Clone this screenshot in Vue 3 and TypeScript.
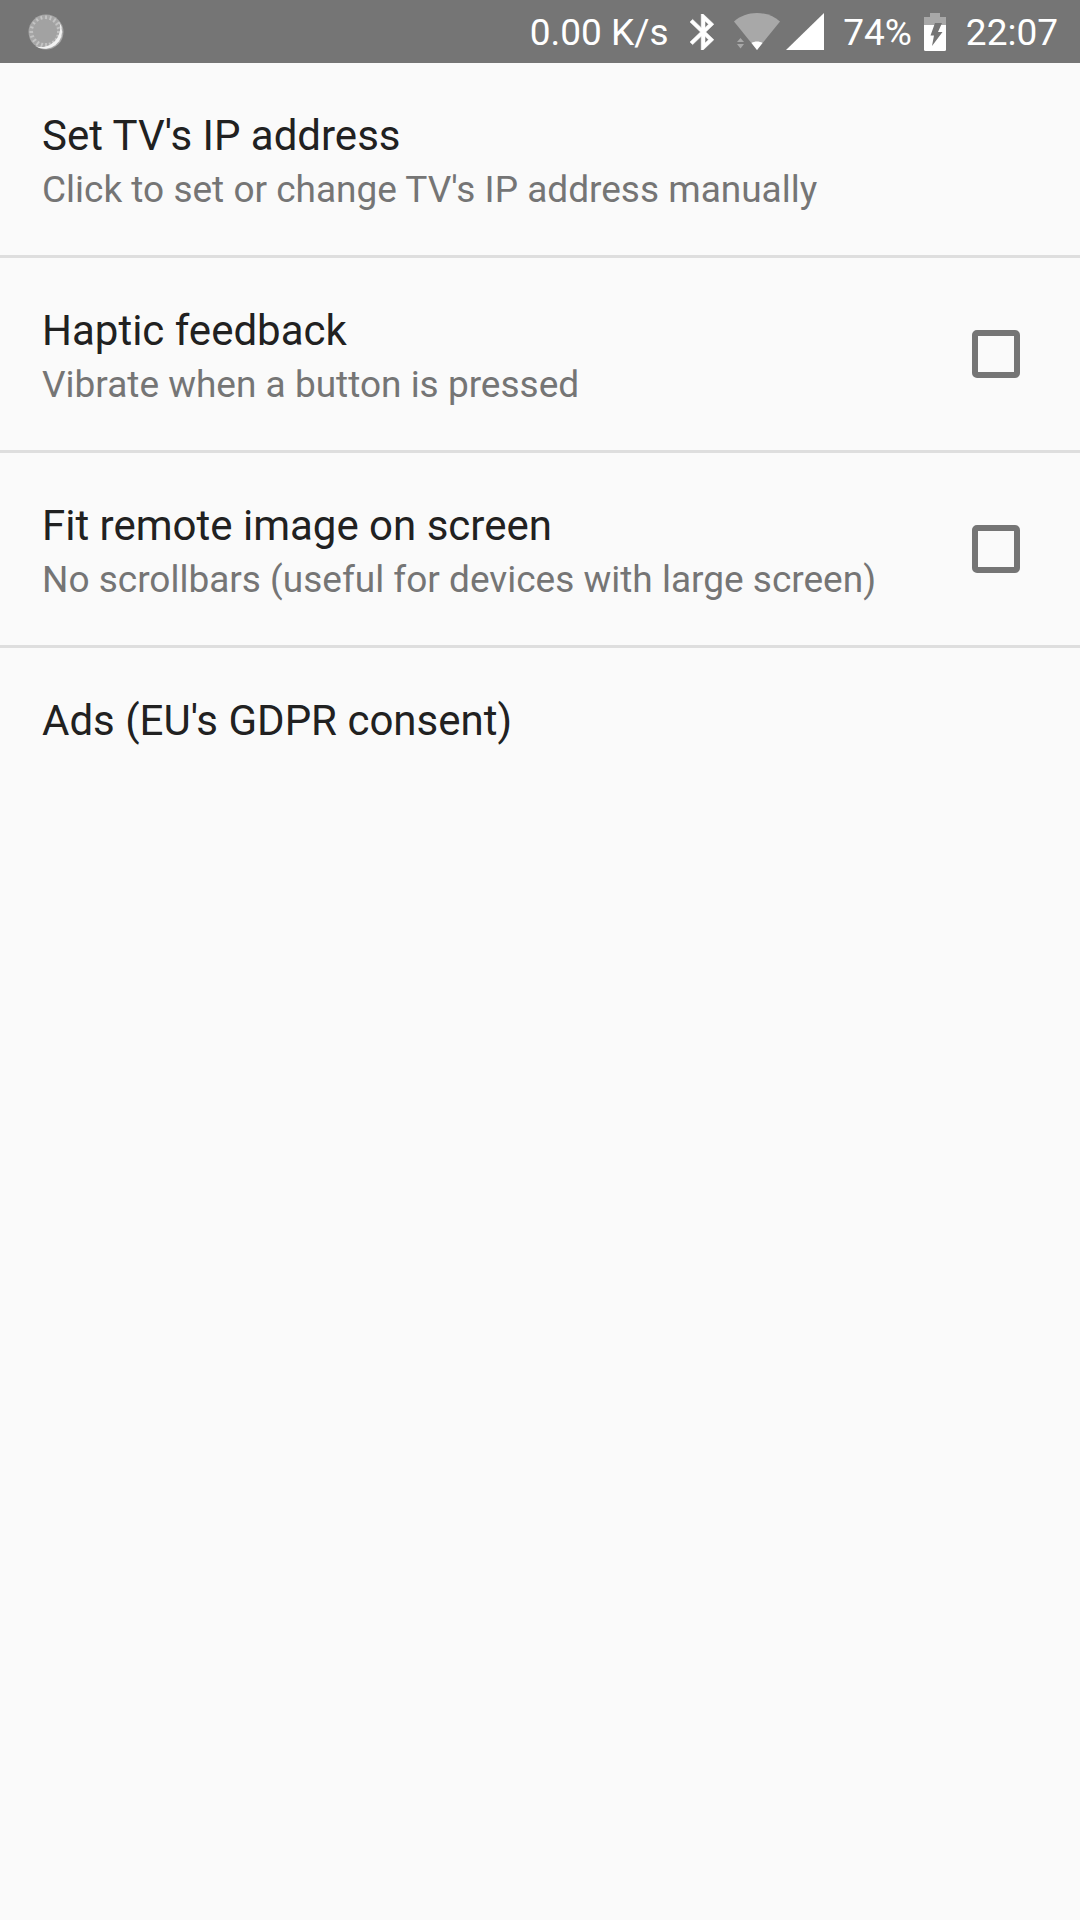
<script setup lang="ts">
interface Row {
  title: string
  summary?: string
  checkbox?: boolean
}
const rows: Row[] = [
  { title: "Set TV's IP address", summary: "Click to set or change TV's IP address manually" },
  { title: 'Haptic feedback', summary: 'Vibrate when a button is pressed', checkbox: true },
  { title: 'Fit remote image on screen', summary: 'No scrollbars (useful for devices with large screen)', checkbox: true },
  { title: "Ads (EU's GDPR consent)" },
]
const ticks = Array.from({ length: 20 }, (_, i) => i * 18)
</script>

<template>
  <div class="screen">
    <header class="status">
      <svg class="spinner" width="38" height="38" viewBox="0 0 38 38">
        <circle cx="19" cy="19" r="17.5" fill="#a6a6a6" />
        <g stroke="#c4c4c4" stroke-width="1.8">
          <line v-for="t in ticks" :key="t" x1="19" y1="2.5" x2="19" y2="8" :transform="`rotate(${t} 19 19)`" />
        </g>
        <circle cx="18" cy="18" r="12" fill="#a2a2a2" />
        <path d="M32 8.5A17.5 17.5 0 0 1 8 33 A19 19 0 0 0 32 8.5Z" fill="#f2f2f2" />
      </svg>
      <span class="spacer"></span>
      <span class="st speed">0.00 K/s</span>
      <svg class="bt" width="24" height="36" viewBox="5 2 12.8 20" preserveAspectRatio="none">
        <path fill="#fff" stroke="#fff" stroke-width="0.3" d="M17.71 7.71L12 2h-1v7.59L6.41 5 5 6.41 10.59 12 5 17.59 6.41 19 11 14.41V22h1l5.71-5.71-4.3-4.29 4.3-4.29zM13 5.83l1.88 1.88L13 9.59V5.83zm1.88 10.46L13 18.17v-3.76l1.88 1.88z" />
      </svg>
      <svg class="wifi" width="46" height="37" viewBox="0 0 46 37">
        <path fill="#a8a8a8" d="M0 8.5C6 3 14 0 23 0s17 3 23 8.5L23 37Z" />
        <path fill="#fff" d="M17.5 30c3-2 8-2 11 0L23 37Z" />
        <path fill="#a8a8a8" d="M6.5 25l3.5 4H3ZM3 31h7l-3.5 4.5Z" />
      </svg>
      <svg class="signal" width="38" height="37" viewBox="0 0 38 37">
        <path fill="#fff" d="M38 0V37H0Z" />
      </svg>
      <span class="st pct">74%</span>
      <svg class="batt" width="22" height="38" viewBox="0 0 22 38">
        <path fill="#a8a8a8" d="M6 0h10v4h6v8H0V4h6Z" />
        <path fill="#fff" d="M0 12h22v24.5a1.5 1.5 0 0 1-1.5 1.5H1.500A1.500 1.500 0 0 1 0 36.500Z" />
        <path fill="#757575" d="M11 10h7l-4 9h4.500L8 33l2-10.500H6.500Z" />
      </svg>
      <span class="st time">22:07</span>
    </header>

    <div
      v-for="(row, i) in rows"
      :key="row.title"
      class="row"
      :class="{ divided: i < rows.length - 1 }"
    >
      <div class="copy">
        <div class="title">{{ row.title }}</div>
        <div v-if="row.summary" class="summary">{{ row.summary }}</div>
      </div>
      <span v-if="row.checkbox" class="check"></span>
    </div>
  </div>
</template>

<style scoped>
.screen {
  width: 1080px;
  height: 1920px;
  background: #fafafa;
  font-family: Roboto, "Liberation Sans", sans-serif;
  overflow: hidden;
}
.status {
  height: 63px;
  background: #757575;
  display: flex;
  align-items: center;
  color: #fff;
  padding: 0 22px 0 27px;
  box-sizing: border-box;
}
.status svg { flex: none; display: block; }
.spacer { flex: 1; }
.st { font-size: 37px; line-height: 60px; margin-top: 2px; white-space: nowrap; }
.bt { margin-left: 21.5px; }
.wifi { margin-left: 20px; }
.signal { margin-left: 6px; }
.pct { margin-left: 19px; }
.batt { margin-left: 12px; }
.time { margin-left: 20px; }
.row {
  height: 195px;
  box-sizing: border-box;
  display: flex;
  align-items: flex-start;
  padding: 47px 60px 0 42px;
}
.row.divided { border-bottom: 3px solid #dedede; }
.copy { flex: 1; min-width: 0; }
.title {
  font-size: 42px;
  line-height: 52px;
  color: #212121;
}
.summary {
  font-size: 37px;
  line-height: 56px;
  margin-top: -0.5px;
  color: #757575;
}
.check {
  flex: none;
  width: 48px;
  height: 48px;
  box-sizing: border-box;
  border: 6px solid #757575;
  border-radius: 5px;
  margin-top: 25px;
}
</style>
